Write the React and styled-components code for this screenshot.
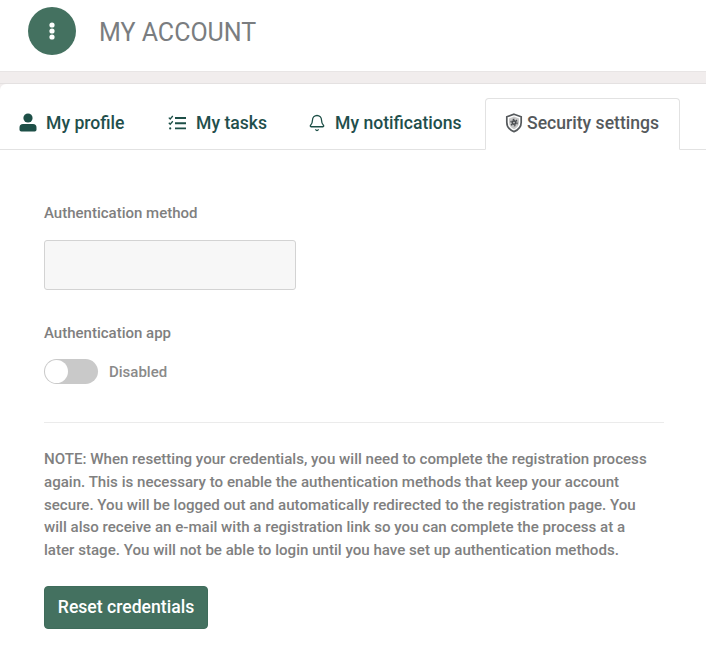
import React from 'react';
import styled, { createGlobalStyle } from 'styled-components';
import { Bell } from 'lucide-react';

const GlobalStyle = createGlobalStyle`
  html, body {
    margin: 0;
    padding: 0;
    background: #fff;
  }
  body {
    font-family: Roboto, "Liberation Sans", sans-serif;
  }
`;

const Page = styled.div`
  width: 706px;
  height: 645px;
  overflow: hidden;
  background: #fff;
`;

const Header = styled.header`
  height: 71px;
  box-sizing: border-box;
  padding: 7px 0 0 28px;
  display: flex;
  align-items: flex-start;
  gap: 23px;
`;

const MenuButton = styled.div`
  width: 48px;
  height: 48px;
  border-radius: 50%;
  background: #447160;
  display: flex;
  align-items: center;
  justify-content: center;
`;

const Title = styled.h1`
  margin: 11px 0 0;
  font-size: 25px;
  line-height: 30px;
  font-weight: 400;
  color: #7a7d80;
`;

const Band = styled.div`
  height: 13px;
  box-sizing: border-box;
  background: #f1eded;
  border-top: 1px solid #e8e5e5;
  border-bottom: 1px solid #e4e1e1;
`;

const TabBarWrap = styled.div`
  background: #f1eded;
`;

const TabBar = styled.nav`
  height: 66px;
  box-sizing: border-box;
  padding-top: 14px;
  display: flex;
  align-items: stretch;
  background: #fff;
  border-bottom: 1px solid #e2e2e2;
  border-top-left-radius: 6px;
`;

const Tab = styled.div`
  box-sizing: border-box;
  width: ${(p) => p.$width}px;
  padding-left: ${(p) => p.$pad}px;
  padding-bottom: 2px;
  display: flex;
  align-items: center;
  gap: ${(p) => p.$gap}px;
  font-size: 17.6px;
  font-weight: 500;
  color: ${(p) => (p.$active ? '#55595c' : '#1f4f4c')};
  white-space: nowrap;
  ${(p) =>
    p.$active &&
    `
    height: 52px;
    background: #fff;
    border: 1px solid #e2e2e2;
    border-bottom: 1px solid #fff;
    border-radius: 4px 4px 0 0;
  `}
`;

const Content = styled.main`
  padding: 54px 42px 0 44px;
`;

const FieldLabel = styled.div`
  font-size: 15px;
  line-height: 18px;
  font-weight: 500;
  color: #7f7f7f;
`;

const MethodBox = styled.div`
  width: 252px;
  height: 50px;
  box-sizing: border-box;
  margin: 18px 0 34px;
  background: #f7f7f7;
  border: 1px solid #d3d3d3;
  border-radius: 3px;
`;

const ToggleRow = styled.div`
  display: flex;
  align-items: center;
  gap: 11px;
  margin-top: 17px;
`;

const Toggle = styled.div`
  width: 54px;
  height: 25px;
  border-radius: 13px;
  background: #c9c9c9;
  display: flex;
  align-items: center;
  padding-left: 1px;
  box-sizing: border-box;
`;

const Knob = styled.div`
  width: 23px;
  height: 23px;
  border-radius: 50%;
  background: #fff;
`;

const ToggleText = styled.span`
  font-size: 15px;
  font-weight: 500;
  color: #8a8a8a;
`;

const Divider = styled.hr`
  margin: 38px 0 0;
  border: 0;
  border-top: 1px solid #ebebeb;
`;

const Note = styled.p`
  margin: 25px 0 0;
  padding-right: 10px;
  font-size: 15.1px;
  line-height: 22.8px;
  font-weight: 500;
  color: #808080;
`;

const ResetButton = styled.button`
  display: block;
  margin-top: 24px;
  width: 164px;
  height: 43px;
  border: 1px solid #3f6c5b;
  border-radius: 4px;
  background: #447160;
  color: #fff;
  font-family: inherit;
  font-size: 17.6px;
  font-weight: 500;
  padding: 0 0 1px;
`;

const DotsIcon = () => (
  <svg width="8" height="20" viewBox="0 0 8 20">
    <circle cx="4" cy="4" r="2.6" fill="#fff" />
    <circle cx="4" cy="10" r="2.6" fill="#fff" />
    <circle cx="4" cy="16" r="2.6" fill="#fff" />
  </svg>
);

const UserIcon = () => (
  <svg width="18" height="20" viewBox="0 0 18 20" fill="#1d4f47">
    <circle cx="9" cy="5" r="4.6" />
    <path d="M4 11h10a3.5 3.5 0 0 1 3.5 3.5v2.2a1.8 1.8 0 0 1-1.8 1.8H2.3a1.8 1.8 0 0 1-1.8-1.8v-2.2A3.5 3.5 0 0 1 4 11z" />
  </svg>
);

const TasksIcon = () => (
  <svg width="18" height="16" viewBox="0 0 18 16" fill="none" stroke="#1d4f47" strokeWidth="1.9">
    <path d="M7 3h11M7 8.2h11M7 13.4h11" />
    <path d="M0.8 2.6l1.4 1.4L4.8 1M0.8 7.8l1.4 1.4L4.8 6.2" strokeWidth="1.3" />
    <circle cx="2.2" cy="13.4" r="1.1" fill="#1d4f47" stroke="none" />
  </svg>
);

const ShieldIcon = () => (
  <svg width="18" height="20" viewBox="0 0 18 20">
    <path
      d="M9 1.2l7.2 2.6v5.4c0 4.4-3 7.8-7.2 9.4-4.2-1.6-7.2-5-7.2-9.4V3.8z"
      fill="none"
      stroke="#55595c"
      strokeWidth="1.7"
    />
    <path d="M9 3.6l5 1.9v3.8c0 3.2-2 5.6-5 6.9-3-1.3-5-3.7-5-6.9V5.5z" fill="#c9c9c9" />
    <circle cx="9" cy="9.6" r="2.5" fill="#4a4d50" />
    <circle
      cx="9"
      cy="9.6"
      r="3.2"
      fill="none"
      stroke="#4a4d50"
      strokeWidth="1.2"
      strokeDasharray="1.7 1.65"
    />
    <circle cx="9" cy="9.6" r="0.9" fill="#c9c9c9" />
  </svg>
);

const App = () => (
  <Page>
    <GlobalStyle />
    <Header>
      <MenuButton>
        <DotsIcon />
      </MenuButton>
      <Title>MY ACCOUNT</Title>
    </Header>
    <Band />
    <TabBarWrap>
      <TabBar>
        <Tab $width={146} $pad={19} $gap={9}>
          <UserIcon />
          My profile
        </Tab>
        <Tab $width={141} $pad={22} $gap={10}>
          <TasksIcon />
          My tasks
        </Tab>
        <Tab $width={198} $pad={21} $gap={9}>
          <Bell size={18} color="#1d4f47" strokeWidth={1.7} />
          My notifications
        </Tab>
        <Tab $active $width={195} $pad={19} $gap={4}>
          <ShieldIcon />
          Security settings
        </Tab>
      </TabBar>
    </TabBarWrap>
    <Content>
      <FieldLabel>Authentication method</FieldLabel>
      <MethodBox />
      <FieldLabel>Authentication app</FieldLabel>
      <ToggleRow>
        <Toggle>
          <Knob />
        </Toggle>
        <ToggleText>Disabled</ToggleText>
      </ToggleRow>
      <Divider />
      <Note>
        NOTE: When resetting your credentials, you will need to complete the registration process
        again. This is necessary to enable the authentication methods that keep your account
        secure. You will be logged out and automatically redirected to the registration page. You
        will also receive an e-mail with a registration link so you can complete the process at a
        later stage. You will not be able to login until you have set up authentication methods.
      </Note>
      <ResetButton>Reset credentials</ResetButton>
    </Content>
  </Page>
);

export default App;
